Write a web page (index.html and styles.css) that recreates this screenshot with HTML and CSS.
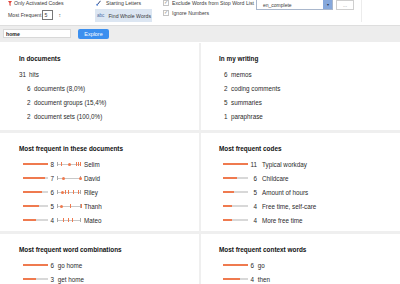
FILE: index.html
```html
<!DOCTYPE html>
<html lang="en">
<head>
    <meta charset="UTF-8">
    <title>Word Explorer</title>
    <link rel="stylesheet" href="styles.css">
</head>
<body>
    <div class="toolbar">
        <div class="tb-group g1">
            <div class="tb-row">
                <svg class="ico-filter" width="4" height="5" viewBox="0 0 4 5"><path d="M0 0H4L2.6 2V5L1.4 4.2V2Z" fill="#e0453c"/></svg>
                <span>Only Activated Codes</span>
            </div>
            <div class="tb-row">
                <span>Most Frequent</span>
                <span class="spin">5</span>
                <span class="stepper">&#8597;</span>
            </div>
        </div>
        <div class="tb-group g2">
            <div class="tb-row opt">
                <svg class="ico-start" width="5" height="6" viewBox="0 0 5 6"><path d="M1.5 4.5L4.5 0.8" stroke="#2b3f73" stroke-width="1"/><circle cx="1.2" cy="4.8" r="1" fill="#4f7fd0"/></svg>
                <span>Starting Letters</span>
            </div>
            <div class="tb-row opt active">
                <span class="abc">abc</span>
                <span>Find Whole Words</span>
            </div>
        </div>
        <div class="tb-group g3">
            <div class="checks">
                <div class="tb-row"><span class="check">&#10003;</span><span>Exclude Words from Stop Word List</span></div>
                <div class="tb-row"><span class="check">&#10003;</span><span>Ignore Numbers</span></div>
            </div>
            <div class="select">
                <span class="sel-text">en_complete</span>
                <span class="sel-btn">&#9662;</span>
            </div>
            <div class="dots-btn">...</div>
        </div>
        <div class="tb-sep"></div>
    </div>

    <div class="search">
        <div class="search-input">home</div>
        <div class="explore">Explore</div>
    </div>

    <div class="grid">
        <div class="panel left">
            <div class="heading">In documents</div>
            <div class="stat first"><span class="num">31</span><span>hits</span></div>
            <div class="stat"><span class="num">6</span><span>documents (8,0%)</span></div>
            <div class="stat"><span class="num">2</span><span>document groups (15,4%)</span></div>
            <div class="stat"><span class="num">2</span><span>document sets (100,0%)</span></div>
        </div>
        <div class="panel right">
            <div class="heading">In my writing</div>
            <div class="stat"><span class="num">6</span><span>memos</span></div>
            <div class="stat"><span class="num">2</span><span>coding comments</span></div>
            <div class="stat"><span class="num">5</span><span>summaries</span></div>
            <div class="stat"><span class="num">1</span><span>paraphrase</span></div>
        </div>

        <div class="panel left">
            <div class="heading">Most frequent in these documents</div>
            <div class="bar-row">
                <span class="bar"><span class="fill" style="width: 100%"></span></span>
                <span class="num">8</span>
                <span class="strip">
                    <i class="tick" style="left: 3px"></i>
                    <i class="dot" style="left: 11px"></i>
                    <i class="tick" style="left: 18px"></i>
                    <i class="tick" style="left: 20px"></i>
                    <i class="tick" style="left: 22px"></i>
                </span>
                <span>Selim</span>
            </div>
            <div class="bar-row">
                <span class="bar"><span class="fill" style="width: 87.5%"></span></span>
                <span class="num">7</span>
                <span class="strip">
                    <i class="dot" style="left: 4.5px"></i>
                    <i class="dot" style="left: 22px"></i>
                </span>
                <span>David</span>
            </div>
            <div class="bar-row">
                <span class="bar"><span class="fill" style="width: 75%"></span></span>
                <span class="num">6</span>
                <span class="strip">
                    <i class="dot" style="left: 4px"></i>
                    <i class="tick" style="left: 6.5px"></i>
                    <i class="tick" style="left: 10px"></i>
                    <i class="tick" style="left: 15px"></i>
                    <i class="tick" style="left: 20px"></i>
                </span>
                <span>Riley</span>
            </div>
            <div class="bar-row">
                <span class="bar"><span class="fill" style="width: 62.5%"></span></span>
                <span class="num">5</span>
                <span class="strip">
                    <i class="dot" style="left: 2.5px"></i>
                    <i class="tick" style="left: 11.5px"></i>
                    <i class="tick" style="left: 22.5px"></i>
                </span>
                <span>Thanh</span>
            </div>
            <div class="bar-row">
                <span class="bar"><span class="fill" style="width: 50%"></span></span>
                <span class="num">4</span>
                <span class="strip">
                    <i class="tick" style="left: 5px"></i>
                    <i class="tick" style="left: 9.5px"></i>
                    <i class="tick" style="left: 13.5px"></i>
                </span>
                <span>Mateo</span>
            </div>
        </div>
        <div class="panel right codes">
            <div class="heading">Most frequent codes</div>
            <div class="bar-row">
                <span class="bar"><span class="fill" style="width: 100%"></span></span>
                <span class="num">11</span><span>Typical workday</span>
            </div>
            <div class="bar-row">
                <span class="bar"><span class="fill" style="width: 54.5%"></span></span>
                <span class="num">6</span><span>Childcare</span>
            </div>
            <div class="bar-row">
                <span class="bar"><span class="fill" style="width: 45.5%"></span></span>
                <span class="num">5</span><span>Amount of hours</span>
            </div>
            <div class="bar-row">
                <span class="bar"><span class="fill" style="width: 36.4%"></span></span>
                <span class="num">4</span><span>Free time, self-care</span>
            </div>
            <div class="bar-row">
                <span class="bar"><span class="fill" style="width: 36.4%"></span></span>
                <span class="num">4</span><span>More free time</span>
            </div>
        </div>

        <div class="panel left">
            <div class="heading">Most frequent word combinations</div>
            <div class="bar-row words">
                <span class="bar"><span class="fill" style="width: 100%"></span></span>
                <span class="num">6</span><span>go home</span>
            </div>
            <div class="bar-row words">
                <span class="bar"><span class="fill" style="width: 50%"></span></span>
                <span class="num">3</span><span>get home</span>
            </div>
        </div>
        <div class="panel right">
            <div class="heading">Most frequent context words</div>
            <div class="bar-row words">
                <span class="bar"><span class="fill" style="width: 100%"></span></span>
                <span class="num">6</span><span>go</span>
            </div>
            <div class="bar-row words">
                <span class="bar"><span class="fill" style="width: 66.7%"></span></span>
                <span class="num">4</span><span>then</span>
            </div>
        </div>
    </div>
</body>
</html>
```

FILE: styles.css
```css
body {
    margin: 0;
    width: 400px;
    height: 284px;
    overflow: hidden;
    font-family: "Liberation Sans", Arial, sans-serif;
    color: #2a2a2a;
    background: #ffffff;
}

/* toolbar */
.toolbar {
    display: flex;
    align-items: flex-start;
    height: 25px;
    overflow: hidden;
    background: #ffffff;
    font-size: 5.2px;
    color: #3a3a3a;
}
.tb-group {
    margin-top: -2px;
}
.tb-row {
    display: flex;
    align-items: center;
    height: 10px;
    white-space: nowrap;
}
.g1 {
    margin-left: 8px;
    width: 87px;
}
.g1 .tb-row + .tb-row {
    margin-top: 2px;
    height: 9px;
}
.ico-filter {
    margin: 0 2px 0 0;
}
.spin {
    display: inline-block;
    width: 8px;
    height: 8px;
    line-height: 8px;
    margin-left: 1px;
    padding-left: 1px;
    border: 0.5px solid #777;
    background: #fff;
}
.stepper {
    margin-left: 5px;
    font-size: 5px;
    color: #666;
}
.g2 {
    width: 67px;
}
.opt {
    width: 57px;
    padding-left: 1px;
}
.ico-start {
    margin-right: 5px;
}
.opt.active {
    margin-top: 1px;
    height: 13px;
    padding-left: 2px;
    background: #dce6f2;
    width: 55px;
}
.abc {
    font-size: 4.6px;
    color: #4f6fa8;
    margin-right: 4px;
}
.g3 {
    display: flex;
    align-items: flex-start;
}
.checks {
    width: 94px;
}
.check {
    display: inline-block;
    width: 4px;
    height: 4px;
    margin: 0 3px 0 1px;
    border: 0.5px solid #c4c4c4;
    font-size: 4.5px;
    line-height: 4px;
    color: #8a8a8a;
    text-align: center;
}
.select {
    display: flex;
    align-items: center;
    width: 77px;
    height: 11px;
    margin-top: 1px;
    border: 0.5px solid #a9b7cc;
    box-sizing: border-box;
    background: #fff;
}
.sel-text {
    flex: 1;
    padding-left: 6px;
    font-size: 5px;
}
.sel-btn {
    width: 9px;
    height: 100%;
    background: #86a8dc;
    color: #2d3a55;
    font-size: 4px;
    line-height: 10px;
    text-align: center;
}
.dots-btn {
    width: 18px;
    height: 10px;
    margin: 2px 0 0 3px;
    border: 0.5px solid #cfcfcf;
    box-sizing: border-box;
    text-align: center;
    font-size: 5px;
    line-height: 9px;
    color: #888;
}
.tb-sep {
    width: 1px;
    height: 22px;
    margin-left: 7px;
    background: #ececec;
}

/* search band */
.search {
    display: flex;
    align-items: flex-start;
    height: 13px;
    padding: 3px 0 0 3px;
    background: #ededed;
    border-top: 0.5px solid #dedede;
}
.search-input {
    width: 68px;
    height: 9px;
    padding-left: 2px;
    background: #fff;
    border: 0.5px solid #d8d8d8;
    box-sizing: border-box;
    font-size: 5.2px;
    line-height: 8px;
    font-weight: bold;
    color: #222;
}
.explore {
    width: 31px;
    height: 10px;
    margin-left: 7px;
    border-radius: 2px;
    background: #3b8fef;
    color: #fff;
    font-size: 5.4px;
    line-height: 10px;
    text-align: center;
}

/* result panels */
.grid {
    display: grid;
    grid-template-columns: 199px 199px;
    grid-template-rows: 87px 98px 60px;
    column-gap: 2px;
    row-gap: 3px;
    margin-top: 1px;
    background: #efefef;
    font-size: 6.3px;
}
.panel {
    background: #fff;
    padding-top: 9px;
}
.panel.left {
    padding-left: 19px;
}
.panel.right {
    padding-left: 18px;
}
.heading {
    height: 14px;
    line-height: 14px;
    font-weight: bold;
    font-size: 6.4px;
    color: #111;
    margin-bottom: 1px;
}
.stat {
    display: flex;
    align-items: center;
    height: 14px;
}
.stat .num {
    width: 11.5px;
    margin-right: 3.5px;
    text-align: right;
}
.stat.first .num {
    width: 6px;
    margin-right: 4px;
}
.right .stat .num {
    width: 8.5px;
    margin-right: 3.5px;
}
.bar-row {
    display: flex;
    align-items: center;
    height: 14px;
    white-space: nowrap;
}
.bar {
    position: relative;
    width: 25px;
    height: 1.6px;
    margin-left: 4px;
    background: #d8d8d8;
}
.fill {
    position: absolute;
    left: 0;
    top: 0;
    height: 100%;
    background: #ef7a4f;
}
.bar-row .num {
    width: 6px;
    text-align: right;
}
.codes .bar-row .num {
    width: 9px;
    margin-right: 5px;
}
.words .num {
    margin-right: 3.7px;
}
.strip {
    position: relative;
    width: 24px;
    height: 4px;
    margin: 0 3px 0 3px;
    border-left: 0.6px solid #aaa;
    border-right: 0.6px solid #aaa;
    box-sizing: border-box;
}
.strip::before {
    content: "";
    position: absolute;
    left: 0;
    right: 0;
    top: 1.5px;
    height: 1px;
    background: #c8c8c8;
}
.tick {
    position: absolute;
    top: 0;
    width: 1px;
    height: 4px;
    background: #ef7a4f;
}
.dot {
    position: absolute;
    top: 0.5px;
    width: 3px;
    height: 3px;
    margin-left: -1px;
    border-radius: 50%;
    background: #ef7a4f;
}
```
